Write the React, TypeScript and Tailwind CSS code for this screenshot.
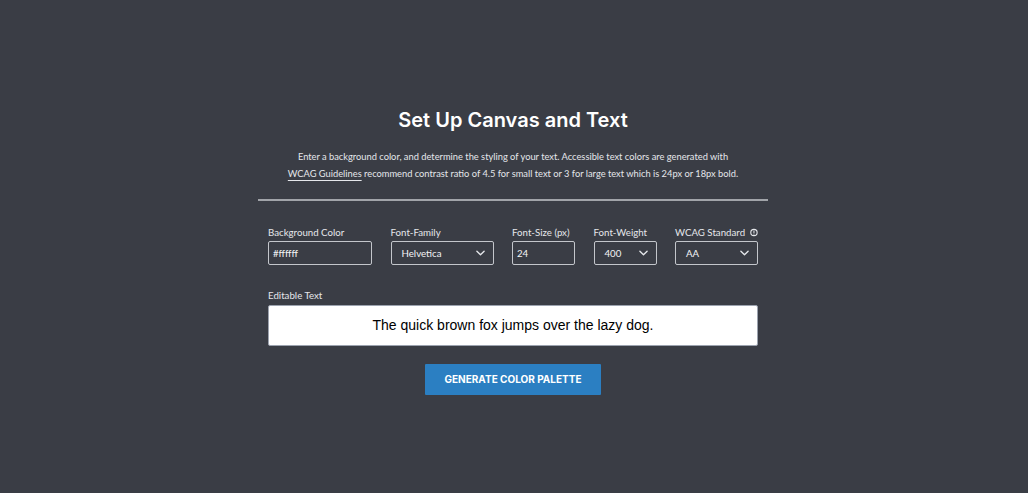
import React from "react";

const Chevron = () => (
  <svg width="9" height="6" viewBox="0 0 10 6" fill="none" className="shrink-0">
    <path d="M1 1l4 4 4-4" stroke="#e5e7eb" strokeWidth="1.5" strokeLinecap="round" strokeLinejoin="round" />
  </svg>
);

const Field = ({ label, width, children, icon }: { label: string; width: string; children: React.ReactNode; icon?: boolean }) => (
  <div className={`flex flex-col shrink-0 ${width}`}>
    <div className="flex items-center gap-[5px] text-[9.7px] leading-[14px] text-[#e5e7eb] mb-[2px] whitespace-nowrap">
      {label}
      {icon && (
        <svg width="9" height="9" viewBox="0 0 10 10">
          <circle cx="5" cy="5" r="4" stroke="#e5e7eb" strokeWidth="1.4" fill="none" />
          <rect x="4.35" y="2.4" width="1.3" height="3.2" fill="#e5e7eb" />
          <rect x="4.35" y="6.3" width="1.3" height="1.3" fill="#e5e7eb" />
        </svg>
      )}
    </div>
    {children}
  </div>
);

const Box = ({ children, select }: { children: React.ReactNode; select?: boolean }) => (
  <div
    className={`h-[24px] border border-[#c3c6cb] rounded-[2px] flex items-center text-[9.7px] text-[#f3f4f6] ${
      select ? "justify-between pl-[10px] pr-[8px]" : "px-[4px]"
    }`}
  >
    <span>{children}</span>
    {select && <Chevron />}
  </div>
);

export default function App() {
  return (
    <div className="min-h-screen w-full bg-[#3a3d45] flex justify-center" style={{ fontFamily: "Lato, 'Open Sans', sans-serif" }}>
      <div className="w-[510px] pt-[106px] -translate-x-[1px]">
        <h1
          className="text-center text-[20px] leading-[28px] font-semibold text-white"
          style={{ fontFamily: "Inter, 'Open Sans', sans-serif" }}
        >
          Set Up Canvas and Text
        </h1>
        <p className="mt-[14px] text-center text-[9.3px] leading-[17px] text-[#e5e7eb] whitespace-nowrap">
          Enter a background color, and determine the styling of your text. Accessible text colors are generated with
          <br />
          <span className="underline underline-offset-[3px] decoration-[#e5e7eb]">WCAG Guidelines</span> recommend contrast ratio of 4.5 for small text or 3 for large text which is 24px or 18px bold.
        </p>
        <div className="mt-[17px] h-[2px] bg-[#a1a4a9]" />
        <div className="px-[10px] pt-[24px]">
          <div className="flex justify-between">
            <Field label="Background Color" width="w-[104px]">
              <Box>#ffffff</Box>
            </Field>
            <Field label="Font-Family" width="w-[103px]">
              <Box select>Helvetica</Box>
            </Field>
            <Field label="Font-Size (px)" width="w-[63px]">
              <Box>24</Box>
            </Field>
            <Field label="Font-Weight" width="w-[63px]">
              <Box select>400</Box>
            </Field>
            <Field label="WCAG Standard" width="w-[83px]" icon>
              <Box select>AA</Box>
            </Field>
          </div>
          <div className="mt-[23px] text-[9.7px] leading-[14px] text-[#e5e7eb] mb-[3px]">Editable Text</div>
          <div
            className="h-[41px] bg-white rounded-[2px] border border-[#9ca3af] flex items-center justify-center text-[14px] text-black"
            style={{ fontFamily: "'Liberation Sans', Arial, sans-serif" }}
          >
            The quick brown fox jumps over the lazy dog.
          </div>
          <div className="flex justify-center mt-[18px]">
            <button
              className="w-[176px] h-[31px] bg-[#2b7fc2] rounded-[1px] text-white text-[10px] font-bold uppercase"
              style={{ fontFamily: "Inter, 'Open Sans', sans-serif" }}
            >
              Generate Color Palette
            </button>
          </div>
        </div>
      </div>
    </div>
  );
}
